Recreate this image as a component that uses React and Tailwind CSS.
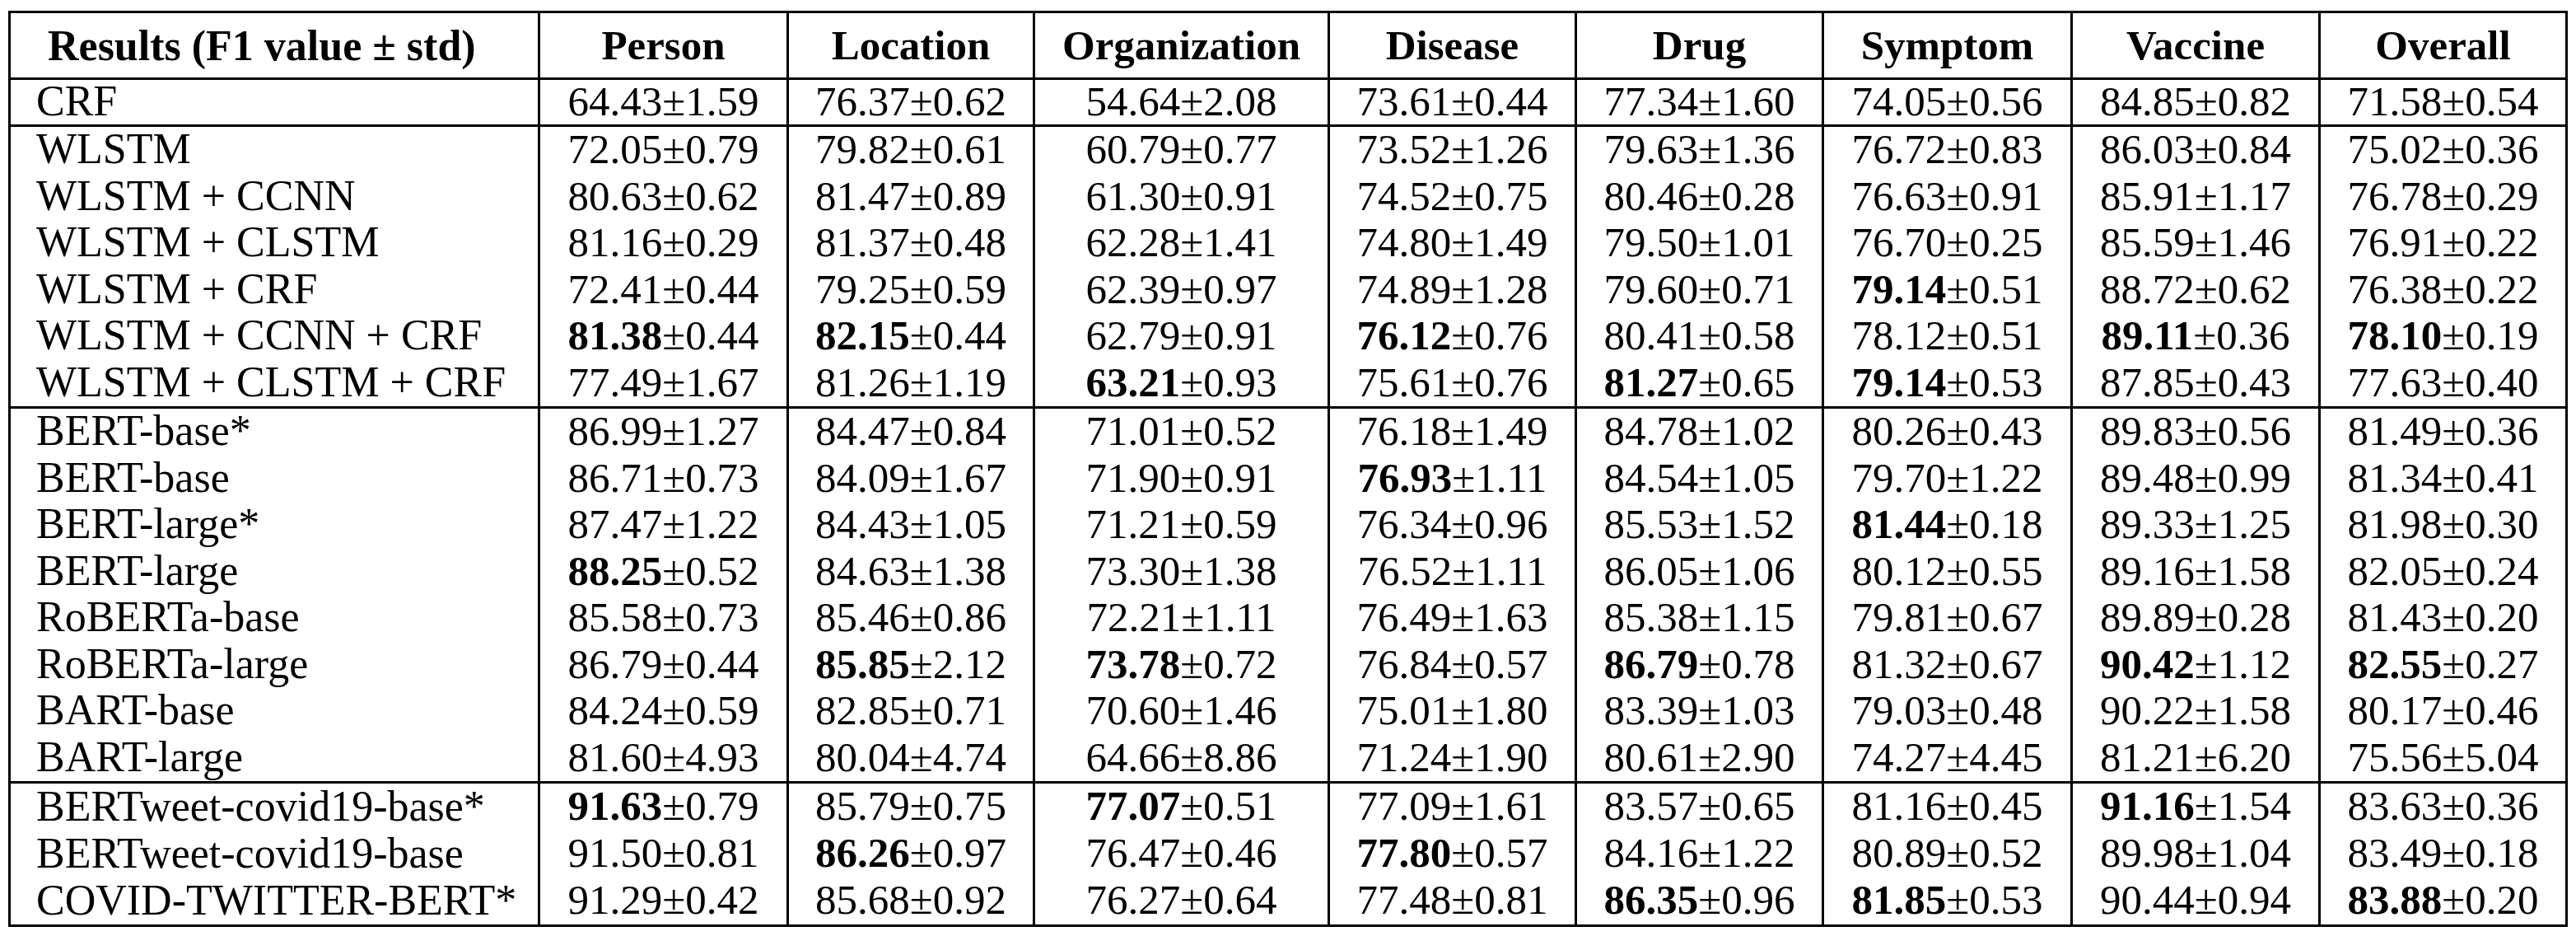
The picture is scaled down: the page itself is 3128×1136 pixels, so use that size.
import React from "react";

const COLS = "grid grid-cols-[640px_302px_299px_358px_300px_300px_302px_301px_300px]";
const HEAD = ["Person", "Location", "Organization", "Disease", "Drug", "Symptom", "Vaccine", "Overall"];

const groups = [
  {
    h: "h-[54px] leading-[52px]",
    rows: [
      ["CRF", "64.43±1.59", "76.37±0.62", "54.64±2.08", "73.61±0.44", "77.34±1.60", "74.05±0.56", "84.85±0.82", "71.58±0.54"],
    ],
  },
  {
    h: "h-[56.5px] leading-[54px]",
    rows: [
      ["WLSTM", "72.05±0.79", "79.82±0.61", "60.79±0.77", "73.52±1.26", "79.63±1.36", "76.72±0.83", "86.03±0.84", "75.02±0.36"],
      ["WLSTM + CCNN", "80.63±0.62", "81.47±0.89", "61.30±0.91", "74.52±0.75", "80.46±0.28", "76.63±0.91", "85.91±1.17", "76.78±0.29"],
      ["WLSTM + CLSTM", "81.16±0.29", "81.37±0.48", "62.28±1.41", "74.80±1.49", "79.50±1.01", "76.70±0.25", "85.59±1.46", "76.91±0.22"],
      ["WLSTM + CRF", "72.41±0.44", "79.25±0.59", "62.39±0.97", "74.89±1.28", "79.60±0.71", "!79.14±0.51", "88.72±0.62", "76.38±0.22"],
      ["WLSTM + CCNN + CRF", "!81.38±0.44", "!82.15±0.44", "62.79±0.91", "!76.12±0.76", "80.41±0.58", "78.12±0.51", "!89.11±0.36", "!78.10±0.19"],
      ["WLSTM + CLSTM + CRF", "77.49±1.67", "81.26±1.19", "!63.21±0.93", "75.61±0.76", "!81.27±0.65", "!79.14±0.53", "87.85±0.43", "77.63±0.40"],
    ],
  },
  {
    h: "h-[56.5px] leading-[54px]",
    rows: [
      ["BERT-base*", "86.99±1.27", "84.47±0.84", "71.01±0.52", "76.18±1.49", "84.78±1.02", "80.26±0.43", "89.83±0.56", "81.49±0.36"],
      ["BERT-base", "86.71±0.73", "84.09±1.67", "71.90±0.91", "!76.93±1.11", "84.54±1.05", "79.70±1.22", "89.48±0.99", "81.34±0.41"],
      ["BERT-large*", "87.47±1.22", "84.43±1.05", "71.21±0.59", "76.34±0.96", "85.53±1.52", "!81.44±0.18", "89.33±1.25", "81.98±0.30"],
      ["BERT-large", "!88.25±0.52", "84.63±1.38", "73.30±1.38", "76.52±1.11", "86.05±1.06", "80.12±0.55", "89.16±1.58", "82.05±0.24"],
      ["RoBERTa-base", "85.58±0.73", "85.46±0.86", "72.21±1.11", "76.49±1.63", "85.38±1.15", "79.81±0.67", "89.89±0.28", "81.43±0.20"],
      ["RoBERTa-large", "86.79±0.44", "!85.85±2.12", "!73.78±0.72", "76.84±0.57", "!86.79±0.78", "81.32±0.67", "!90.42±1.12", "!82.55±0.27"],
      ["BART-base", "84.24±0.59", "82.85±0.71", "70.60±1.46", "75.01±1.80", "83.39±1.03", "79.03±0.48", "90.22±1.58", "80.17±0.46"],
      ["BART-large", "81.60±4.93", "80.04±4.74", "64.66±8.86", "71.24±1.90", "80.61±2.90", "74.27±4.45", "81.21±6.20", "75.56±5.04"],
    ],
  },
  {
    h: "h-[57px] leading-[55px]",
    rows: [
      ["BERTweet-covid19-base*", "!91.63±0.79", "85.79±0.75", "!77.07±0.51", "77.09±1.61", "83.57±0.65", "81.16±0.45", "!91.16±1.54", "83.63±0.36"],
      ["BERTweet-covid19-base", "91.50±0.81", "!86.26±0.97", "76.47±0.46", "!77.80±0.57", "84.16±1.22", "80.89±0.52", "89.98±1.04", "83.49±0.18"],
      ["COVID-TWITTER-BERT*", "91.29±0.42", "85.68±0.92", "76.27±0.64", "77.48±0.81", "!86.35±0.96", "!81.85±0.53", "90.44±0.94", "!83.88±0.20"],
    ],
  },
];

function Value({ v }) {
  if (v.startsWith("!")) {
    const [a, b] = v.slice(1).split("±");
    return (
      <>
        <span className="font-bold">{a}</span>±{b}
      </>
    );
  }
  return <>{v}</>;
}

export default function App() {
  return (
    <div className="w-[3128px] h-[1136px] bg-white pt-[13px] pl-[10px] text-black [font-family:'Liberation_Serif','Times_New_Roman',Times,serif]">
      <div className="w-[3108px] border-[3px] border-black">
        <div className={`${COLS} h-[78px]`}>
          <div className="pl-[45px] pt-[14px] text-[52px] leading-[51px] font-bold whitespace-nowrap">
            Results (F1 value ± std)
          </div>
          {HEAD.map((h) => (
            <div
              key={h}
              className="border-l-[3px] border-black text-center pt-[14px] text-[51px] leading-[51px] font-bold"
            >
              {h}
            </div>
          ))}
        </div>
        {groups.map((g, gi) => (
          <div key={gi} className="border-t-[3px] border-black">
            {g.rows.map((r) => (
              <div key={r[0]} className={`${COLS} ${g.h}`}>
                <div className="pl-[31px] text-[52px] whitespace-nowrap">{r[0]}</div>
                {r.slice(1).map((v, i) => (
                  <div
                    key={i}
                    className="border-l-[3px] border-black text-center text-[51px] whitespace-nowrap"
                  >
                    <Value v={v} />
                  </div>
                ))}
              </div>
            ))}
          </div>
        ))}
      </div>
    </div>
  );
}
